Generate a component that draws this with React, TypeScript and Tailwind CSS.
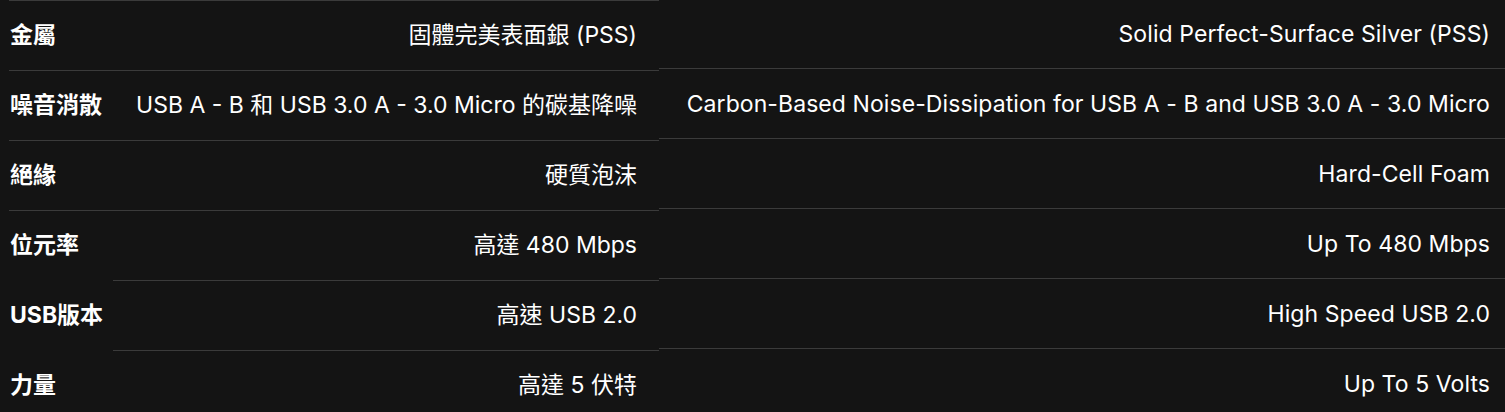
import React from "react";

const left: { label: string; value: string; labelBorder: boolean }[] = [
  { label: "金屬", value: "固體完美表面銀 (PSS)", labelBorder: true },
  { label: "噪音消散", value: "USB A - B 和 USB 3.0 A - 3.0 Micro 的碳基降噪", labelBorder: true },
  { label: "絕緣", value: "硬質泡沫", labelBorder: true },
  { label: "位元率", value: "高達 480 Mbps", labelBorder: true },
  { label: "USB版本", value: "高速 USB 2.0", labelBorder: false },
  { label: "力量", value: "高達 5 伏特", labelBorder: false },
];

const right = [
  "Solid Perfect-Surface Silver (PSS)",
  "Carbon-Based Noise-Dissipation for USB A - B and USB 3.0 A - 3.0 Micro",
  "Hard-Cell Foam",
  "Up To 480 Mbps",
  "High Speed USB 2.0",
  "Up To 5 Volts",
];

export default function App() {
  return (
    <div className="w-[1505px] h-[412px] bg-[#141414] text-white flex overflow-hidden font-['Inter','Noto_Sans_CJK_TC',sans-serif]">
      <div className="ml-[9px] w-[650px] flex flex-col">
        {left.map((r, i) => (
          <div key={i} className="flex h-[70px] shrink-0">
            <div
              className={`w-[104px] shrink-0 flex items-center pl-[1px] text-[23px] font-bold border-t whitespace-nowrap ${
                r.labelBorder ? "border-[#3b3b3b]" : "border-transparent"
              }`}
            >
              {r.label}
            </div>
            <div className="flex-1 flex items-center justify-end pr-[22px] text-[23px] border-t border-[#3b3b3b] whitespace-nowrap">
              {r.value}
            </div>
          </div>
        ))}
      </div>
      <div className="flex-1 flex flex-col mt-[-2px]">
        {right.map((t, i) => (
          <div
            key={i}
            className="h-[70px] shrink-0 flex items-center justify-end pt-[2px] pr-[15px] text-[23px] tracking-[0.08px] border-t border-[#3b3b3b] whitespace-nowrap"
          >
            {t}
          </div>
        ))}
      </div>
    </div>
  );
}
